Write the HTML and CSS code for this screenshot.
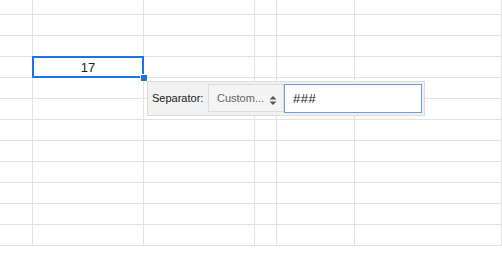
FILE: index.html
```html
<!DOCTYPE html>
<html>
<head>
<meta charset="utf-8">
<link rel="stylesheet" href="styles.css">
</head>
<body>
<div class="sheet">
  <div class="grid">
    <div class="c"></div><div class="c"></div><div class="c"></div><div class="c"></div><div class="c"></div><div class="c"></div>
    <div class="c"></div><div class="c"></div><div class="c"></div><div class="c"></div><div class="c"></div><div class="c"></div>
    <div class="c"></div><div class="c"></div><div class="c"></div><div class="c"></div><div class="c"></div><div class="c"></div>
    <div class="c"></div><div class="c val">17</div><div class="c"></div><div class="c"></div><div class="c"></div><div class="c"></div>
    <div class="c"></div><div class="c"></div><div class="c"></div><div class="c"></div><div class="c"></div><div class="c"></div>
    <div class="c"></div><div class="c"></div><div class="c"></div><div class="c"></div><div class="c"></div><div class="c"></div>
    <div class="c"></div><div class="c"></div><div class="c"></div><div class="c"></div><div class="c"></div><div class="c"></div>
    <div class="c"></div><div class="c"></div><div class="c"></div><div class="c"></div><div class="c"></div><div class="c"></div>
    <div class="c"></div><div class="c"></div><div class="c"></div><div class="c"></div><div class="c"></div><div class="c"></div>
    <div class="c"></div><div class="c"></div><div class="c"></div><div class="c"></div><div class="c"></div><div class="c"></div>
    <div class="c"></div><div class="c"></div><div class="c"></div><div class="c"></div><div class="c"></div><div class="c"></div>
    <div class="c"></div><div class="c"></div><div class="c"></div><div class="c"></div><div class="c"></div><div class="c"></div>
  </div>
  <div class="selection"><span class="handle"></span></div>
  <div class="popup">
    <span class="label">Separator:</span>
    <div class="select">
      <span class="select-text">Custom...</span>
      <svg class="arrows" width="8" height="11" viewBox="0 0 8 11"><path d="M0.5 4.5 L4 1 L7.5 4.5 Z" fill="#555"/><path d="M0.5 6.5 L4 10 L7.5 6.5 Z" fill="#555"/></svg>
    </div>
    <div class="input">###</div>
  </div>
</div>
</body>
</html>
```
FILE: styles.css
```css
html, body {
  margin: 0;
  padding: 0;
  background: #fff;
}
.sheet {
  position: relative;
  width: 502px;
  height: 253px;
  overflow: hidden;
  font-family: Arial, "Liberation Sans", sans-serif;
}
.grid {
  display: grid;
  grid-template-columns: 33px 111px 111px 22px 78px 1fr;
  grid-template-rows: 15px repeat(11, 21px);
}
.c {
  box-sizing: border-box;
  border-right: 1px solid #e2e2e2;
  border-bottom: 1px solid #e2e2e2;
}
.val {
  display: flex;
  align-items: center;
  justify-content: center;
  font-size: 13px;
  color: #222;
  padding-top: 1px;
}
.selection {
  position: absolute;
  left: 32px;
  top: 56px;
  width: 112px;
  height: 22px;
  box-sizing: border-box;
  border: 2px solid #1a73e8;
}
.handle {
  position: absolute;
  right: -5px;
  bottom: -5px;
  width: 6px;
  height: 6px;
  background: #1a73e8;
  border: 1px solid #fff;
  border-right: none;
  border-bottom: none;
}
.popup {
  position: absolute;
  left: 147px;
  top: 81px;
  width: 278px;
  height: 35px;
  box-sizing: border-box;
  border: 1px solid #dcdcdc;
  background: #f1f1f1;
  display: flex;
  align-items: flex-start;
  padding: 2px 0 0 4px;
}
.label {
  font-size: 11px;
  color: #222;
  line-height: 28px;
  width: 51px;
  white-space: nowrap;
  margin-right: 5px;
  margin-left: 0;
}
.select {
  box-sizing: border-box;
  width: 76px;
  height: 28px;
  border: 1px solid #dcdcdc;
  background: #f4f4f4;
  display: flex;
  align-items: center;
  padding-left: 8px;
}
.select-text {
  font-size: 11px;
  color: #666;
  flex: 1;
}
.arrows {
  margin-right: 6px;
  margin-top: 4px;
}
.input {
  box-sizing: border-box;
  width: 138px;
  height: 29px;
  border: 1px solid #6f9de4;
  background: #fff;
  font-size: 13px;
  color: #222;
  line-height: 27px;
  padding-left: 8px;
  letter-spacing: 0.5px;
}
```
